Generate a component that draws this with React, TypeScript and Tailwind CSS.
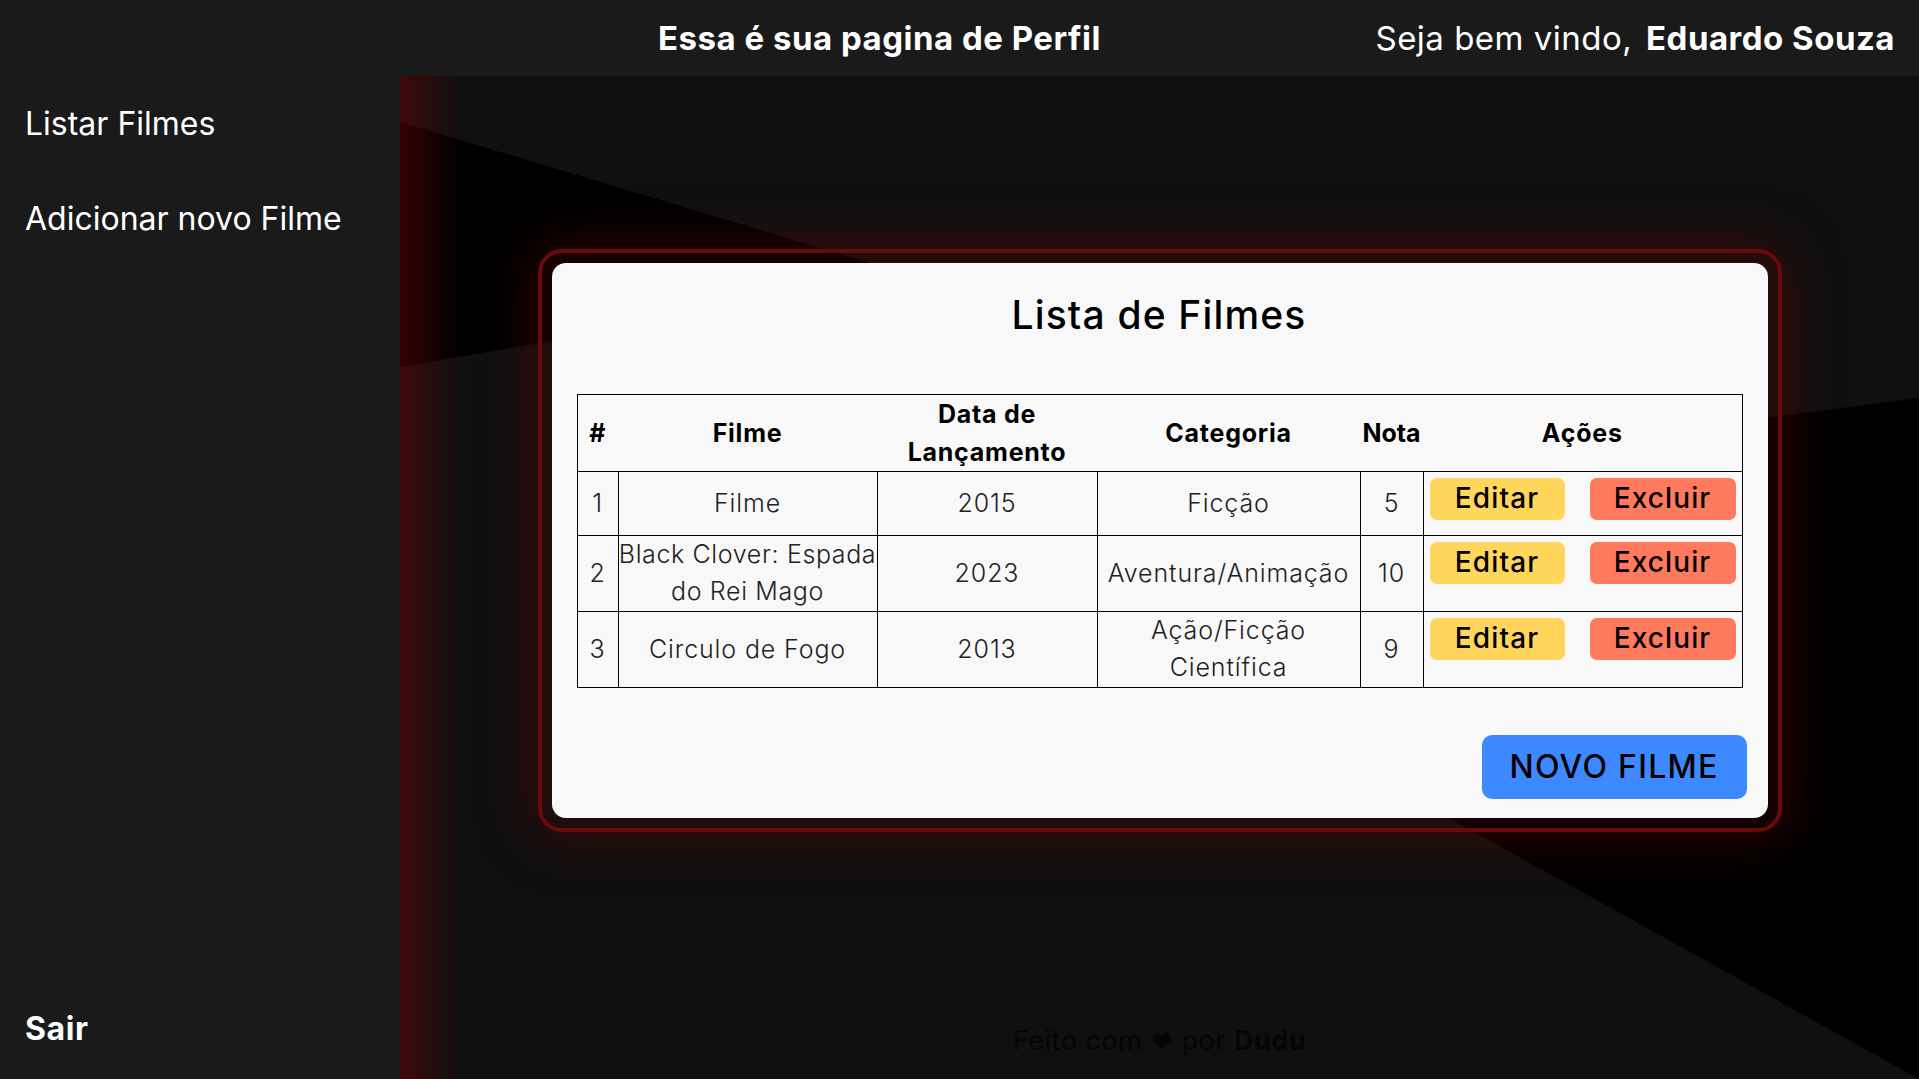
import { Fragment } from "react";

type Filme = {
  id: number;
  titulo: React.ReactNode;
  ano: string;
  categoria: React.ReactNode;
  nota: string;
  alto: boolean;
};

const filmes: Filme[] = [
  { id: 1, titulo: "Filme", ano: "2015", categoria: "Ficção", nota: "5", alto: false },
  {
    id: 2,
    titulo: (
      <span className="tracking-[0.025em]">
        Black Clover: Espada
        <br />
        do Rei Mago
      </span>
    ),
    ano: "2023",
    categoria: "Aventura/Animação",
    nota: "10",
    alto: true,
  },
  {
    id: 3,
    titulo: "Circulo de Fogo",
    ano: "2013",
    categoria: (
      <Fragment>
        Ação/Ficção
        <br />
        Científica
      </Fragment>
    ),
    nota: "9",
    alto: true,
  },
];

function Tabela() {
  return (
    <table className="w-full table-fixed border-collapse border border-black text-center text-[#222]">
      <colgroup>
        <col className="w-[41px]" />
        <col className="w-[259px]" />
        <col className="w-[220px]" />
        <col className="w-[263px]" />
        <col className="w-[63px]" />
        <col className="w-[319px]" />
      </colgroup>
      <thead>
        <tr className="h-[76px] text-[25px] leading-[38px] font-bold tracking-[0.03em] text-black">
          <th>#</th>
          <th>Filme</th>
          <th>
            Data de
            <br />
            Lançamento
          </th>
          <th>Categoria</th>
          <th className="tracking-normal">Nota</th>
          <th>Ações</th>
        </tr>
      </thead>
      <tbody className="text-[25px] leading-[37px] font-light tracking-[0.035em]">
        {filmes.map((f) => (
          <tr key={f.id} className={f.alto ? "h-[76px]" : "h-[64px]"}>
            <td className="border border-black p-0">{f.id}</td>
            <td className="border border-black p-0 whitespace-nowrap">{f.titulo}</td>
            <td className="border border-black p-0">{f.ano}</td>
            <td className="border border-black p-0 whitespace-nowrap">{f.categoria}</td>
            <td className="border border-black p-0">{f.nota}</td>
            <td className="border border-black p-0 align-top">
              <div className="flex justify-between px-[6px] pt-[6px]">
                <button className="h-[42px] w-[135px] rounded-[7px] bg-[#ffd55c] text-[28px] font-medium tracking-[0.04em] text-black">
                  Editar
                </button>
                <button className="h-[42px] w-[146px] rounded-[7px] bg-[#ff7a5c] text-[28px] font-medium tracking-[0.04em] text-black">
                  Excluir
                </button>
              </div>
            </td>
          </tr>
        ))}
      </tbody>
    </table>
  );
}

export default function App() {
  return (
    <div className="flex h-screen w-full flex-col overflow-hidden bg-[#1a1a1a] font-[Inter,'Liberation_Sans',sans-serif] text-white">
      <header className="flex h-[76px] shrink-0 items-center justify-between pl-[658px] pr-[24px] leading-[40px]">
        <h1 className="text-[33px] font-bold tracking-[0.015em]">Essa é sua pagina de Perfil</h1>
        <p className="text-[33px] tracking-[0.015em]">
          Seja bem vindo, <span className="ml-[4px] font-bold">Eduardo Souza</span>
        </p>
      </header>

      <div className="flex min-h-0 flex-1">
        <aside className="flex w-[400px] shrink-0 flex-col px-[25px] pt-[28px] pb-[30px] text-[32px] leading-[40px]">
          <a className="cursor-pointer">Listar Filmes</a>
          <a className="mt-[55px] cursor-pointer">Adicionar novo Filme</a>
          <a className="mt-auto cursor-pointer font-bold tracking-[0.02em]">Sair</a>
        </aside>

        <main className="relative flex flex-1 flex-col overflow-hidden bg-[#101010]">
          <svg
            className="absolute inset-0 h-full w-full"
            viewBox="0 0 1519 1003"
            preserveAspectRatio="none"
          >
            <polygon points="0,46 1101,376 1519,322 1519,1003 181,260 0,291" fill="#000" />
          </svg>
          <div className="pointer-events-none absolute inset-0 bg-[linear-gradient(to_right,rgba(120,0,0,0.45),transparent_60px)]" />

          <div className="relative flex flex-1 items-center justify-center">
            <div className="h-[583px] w-[1244px] rounded-[24px] border-[4px] border-[#6b0a0a] bg-[rgba(90,0,0,0.22)] p-[10px] shadow-[0_0_55px_rgba(110,0,0,0.55)]">
              <div className="flex h-full flex-col rounded-[14px] bg-[#f8f8f8] pt-[30px] pr-[26px] pl-[25px] text-black">
                <h2 className="text-center text-[39px] leading-[44px] font-medium tracking-[0.03em]">
                  Lista de Filmes
                </h2>
                <div className="mt-[57px]">
                  <Tabela />
                </div>
                <div className="mt-[47px] flex justify-end">
                  <button className="-mr-[5px] h-[64px] w-[265px] rounded-[10px] bg-[#3d89ff] text-[32px] font-medium tracking-[0.04em] text-black">
                    NOVO FILME
                  </button>
                </div>
              </div>
            </div>
          </div>

          <footer className="relative flex h-[75px] shrink-0 items-center justify-center text-[27px] tracking-[0.02em] text-[#060606]">
            Feito com <span className="mx-[8px] text-[22px]">♥</span> por{" "}
            <span className="ml-[8px] font-bold">Dudu</span>
          </footer>
        </main>
      </div>
    </div>
  );
}
